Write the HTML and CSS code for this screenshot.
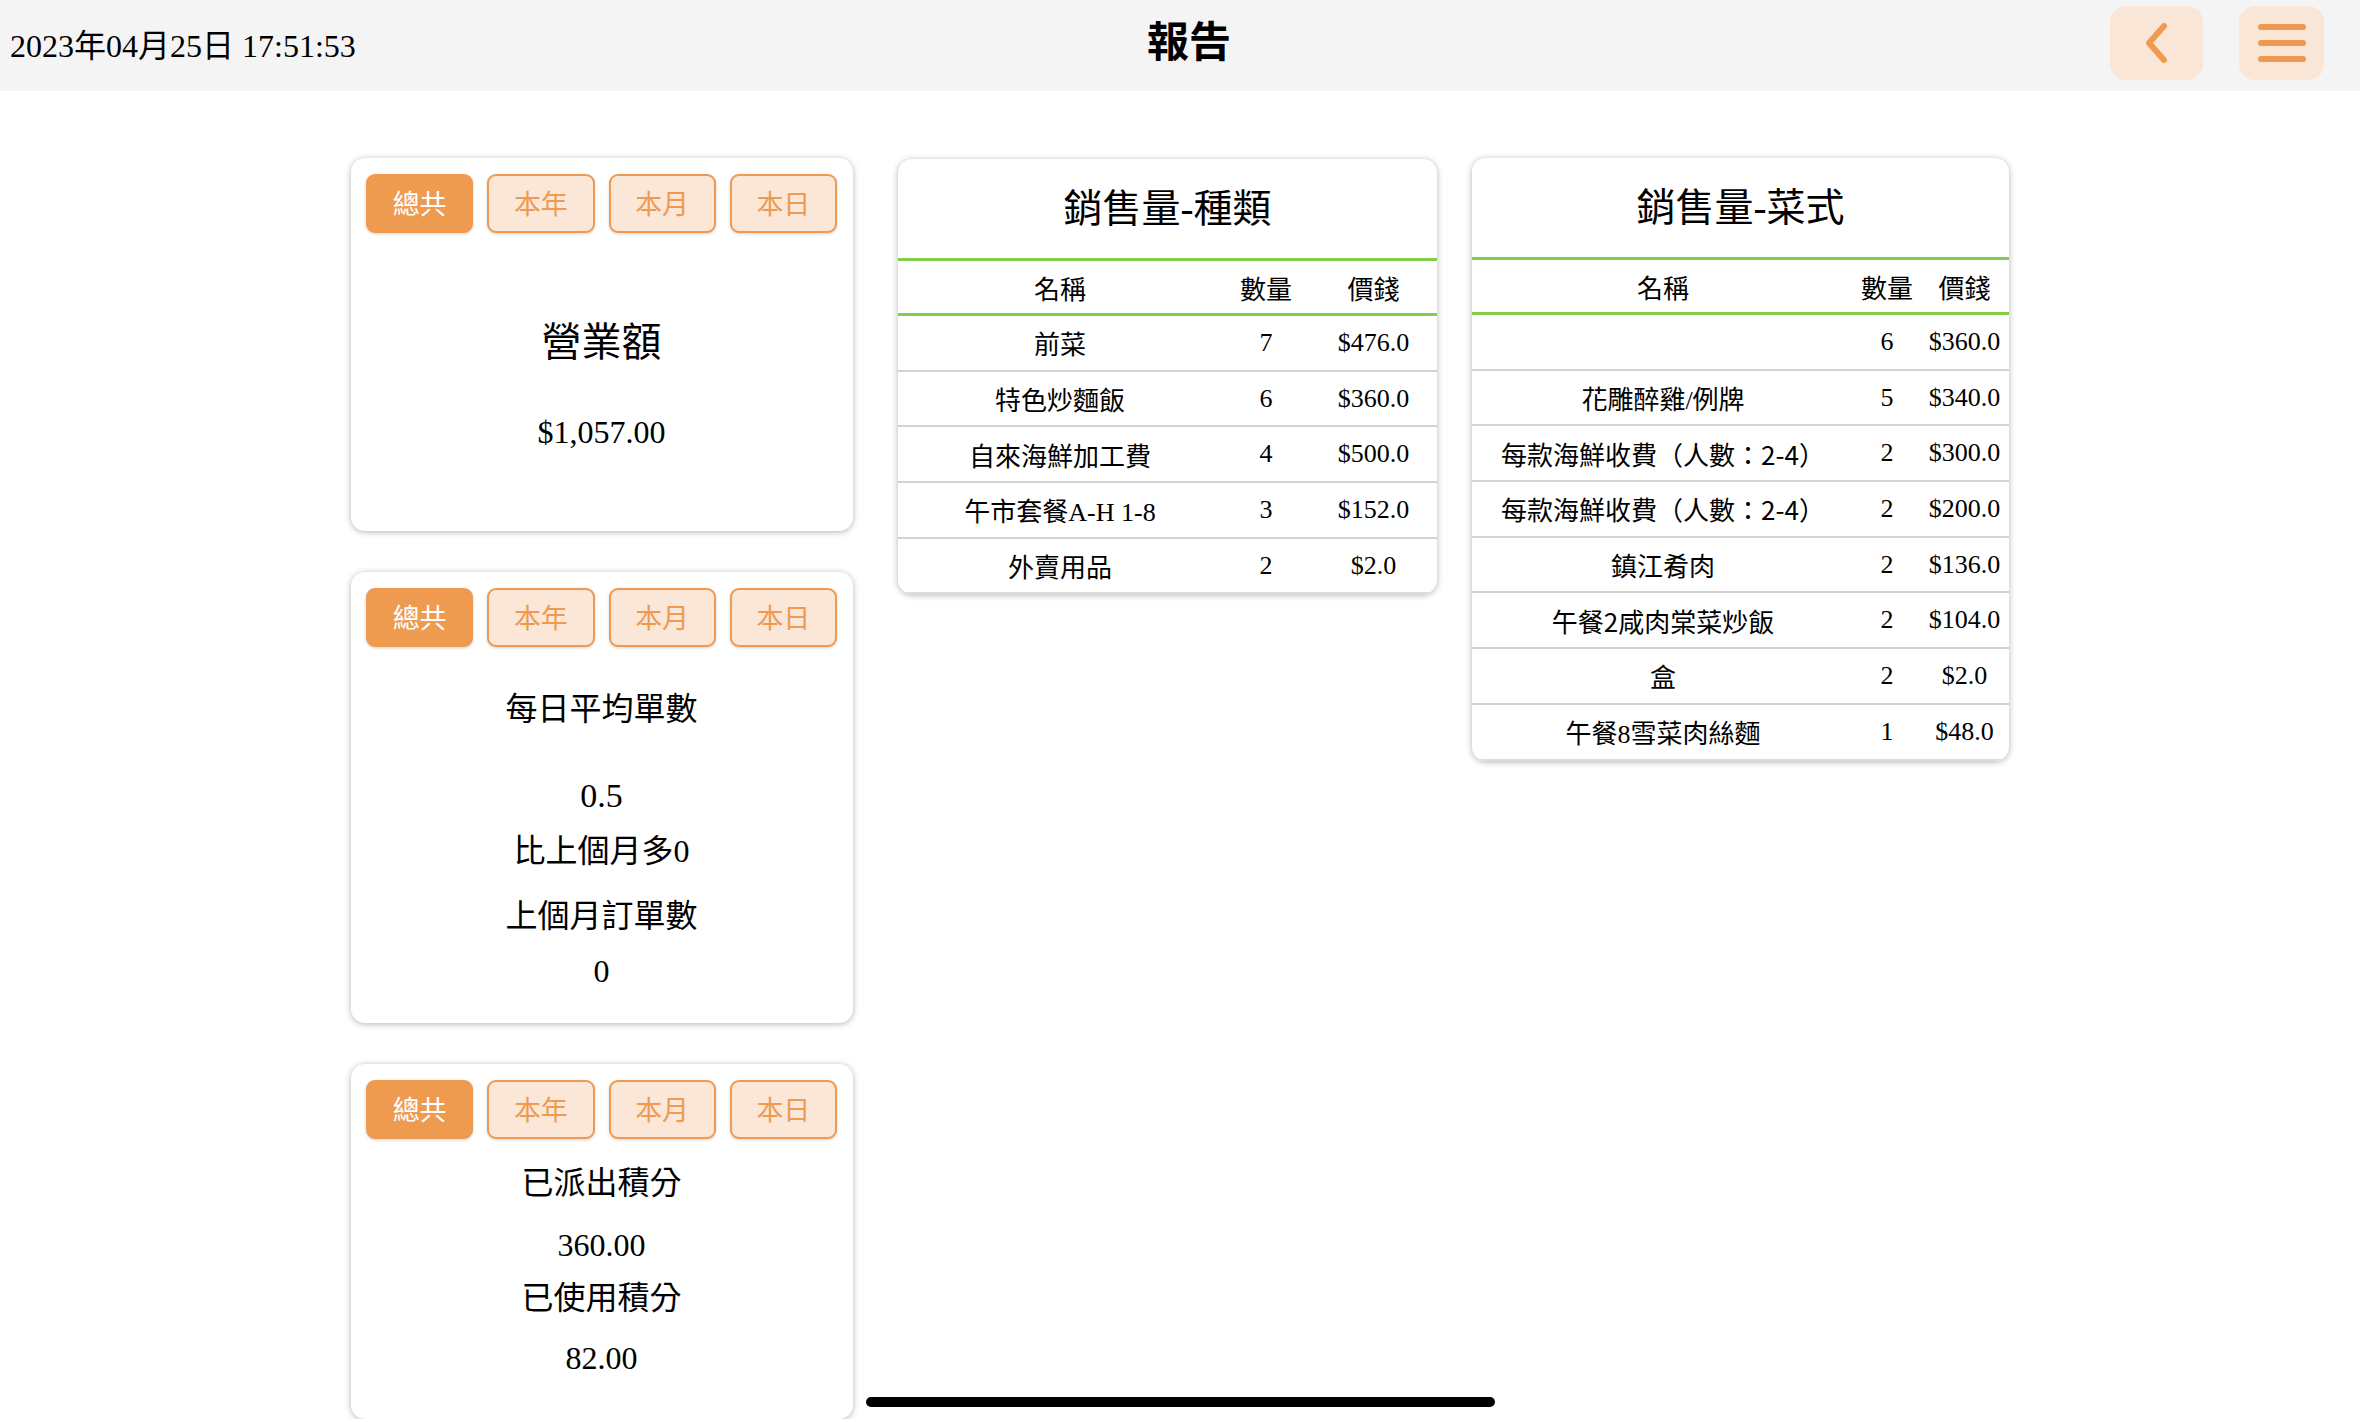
FILE: index.html
```html
<!DOCTYPE html>
<html lang="zh-Hant">
	<head>
		<meta charset="UTF-8">
		<title>報告</title>
		<link rel="stylesheet" href="styles.css">
	</head>
	<body>

		<div class="topbar">
			<div class="topbar-date">2023年04月25日 17:51:53</div>
			<div class="topbar-title">報告</div>
			<div class="topbar-actions">
				<div class="icon-btn back-btn">
					<svg width="30" height="44" viewBox="0 0 30 44">
						<polyline points="22,5 7,22 22,39" fill="none" stroke="#ef9a50" stroke-width="6" stroke-linecap="round" stroke-linejoin="round"/>
					</svg>
				</div>
				<div class="icon-btn menu-btn">
					<svg width="52" height="42" viewBox="0 0 52 42">
						<line x1="5" y1="5" x2="47" y2="5" stroke="#ef9a50" stroke-width="6" stroke-linecap="round"/>
						<line x1="5" y1="21" x2="47" y2="21" stroke="#ef9a50" stroke-width="6" stroke-linecap="round"/>
						<line x1="5" y1="37" x2="47" y2="37" stroke="#ef9a50" stroke-width="6" stroke-linecap="round"/>
					</svg>
				</div>
			</div>
		</div>

		<div class="content">

			<div class="column column-stats">

				<div class="card stat-card card-revenue">
					<div class="tabs">
						<span class="tab active">總共</span>
						<span class="tab">本年</span>
						<span class="tab">本月</span>
						<span class="tab">本日</span>
					</div>
					<div class="stat-title">營業額</div>
					<div class="stat-value revenue-value">$1,057.00</div>
				</div>

				<div class="card stat-card card-orders">
					<div class="tabs">
						<span class="tab active">總共</span>
						<span class="tab">本年</span>
						<span class="tab">本月</span>
						<span class="tab">本日</span>
					</div>
					<div class="stat-line orders-title">每日平均單數</div>
					<div class="stat-line orders-avg">0.5</div>
					<div class="stat-line orders-diff">比上個月多0</div>
					<div class="stat-line orders-last">上個月訂單數</div>
					<div class="stat-line orders-last-value">0</div>
				</div>

				<div class="card stat-card card-points">
					<div class="tabs">
						<span class="tab active">總共</span>
						<span class="tab">本年</span>
						<span class="tab">本月</span>
						<span class="tab">本日</span>
					</div>
					<div class="stat-line points-sent">已派出積分</div>
					<div class="stat-line points-sent-value">360.00</div>
					<div class="stat-line points-used">已使用積分</div>
					<div class="stat-line points-used-value">82.00</div>
				</div>

			</div>

			<div class="column column-types">
				<div class="card table-card">
					<div class="table-title">銷售量-種類</div>
					<table class="sales-table types-table">
						<colgroup>
							<col class="col-name">
							<col class="col-qty">
							<col class="col-price">
						</colgroup>
						<thead>
							<tr><th>名稱</th><th>數量</th><th>價錢</th></tr>
						</thead>
						<tbody>
							<tr><td>前菜</td><td>7</td><td>$476.0</td></tr>
							<tr><td>特色炒麵飯</td><td>6</td><td>$360.0</td></tr>
							<tr><td>自來海鮮加工費</td><td>4</td><td>$500.0</td></tr>
							<tr><td>午市套餐A-H 1-8</td><td>3</td><td>$152.0</td></tr>
							<tr><td>外賣用品</td><td>2</td><td>$2.0</td></tr>
						</tbody>
					</table>
				</div>
			</div>

			<div class="column column-dishes">
				<div class="card table-card">
					<div class="table-title">銷售量-菜式</div>
					<table class="sales-table dishes-table">
						<colgroup>
							<col class="col-name">
							<col class="col-qty">
							<col class="col-price">
						</colgroup>
						<thead>
							<tr><th>名稱</th><th>數量</th><th>價錢</th></tr>
						</thead>
						<tbody>
							<tr><td></td><td>6</td><td>$360.0</td></tr>
							<tr><td>花雕醉雞/例牌</td><td>5</td><td>$340.0</td></tr>
							<tr><td>每款海鮮收費（人數：<span class="sans">2-4</span>）</td><td>2</td><td>$300.0</td></tr>
							<tr><td>每款海鮮收費（人數：<span class="sans">2-4</span>）</td><td>2</td><td>$200.0</td></tr>
							<tr><td>鎮江肴肉</td><td>2</td><td>$136.0</td></tr>
							<tr><td>午餐<span class="sans">2</span>咸肉棠菜炒飯</td><td>2</td><td>$104.0</td></tr>
							<tr><td>盒</td><td>2</td><td>$2.0</td></tr>
							<tr><td>午餐8雪菜肉絲麵</td><td>1</td><td>$48.0</td></tr>
						</tbody>
					</table>
				</div>
			</div>

		</div>

		<div class="home-indicator"></div>

	</body>
</html>
```

FILE: styles.css
```css
body{
	margin:0;
	padding:0;
	background:#fff;
	color:#000;
	font-family:"Liberation Serif","Noto Sans CJK TC",serif;
}

/* top bar */
.topbar{
	height:91px;
	background:#f4f4f4;
	display:grid;
	grid-template-columns:1fr auto 1fr;
	align-items:center;
}
.topbar-date{
	font-size:32px;
	padding-left:10px;
	padding-bottom:5px;
}
.topbar-title{
	font-family:"Noto Sans CJK TC",sans-serif;
	font-weight:bold;
	font-size:42px;
	padding-left:18px;
	padding-bottom:14px;
}
.topbar-actions{
	display:flex;
	justify-content:flex-end;
	align-items:flex-start;
	align-self:start;
	padding-top:6px;
	padding-right:36px;
	gap:36px;
}
.icon-btn{
	height:74px;
	background:#fae6d7;
	border-radius:16px;
	display:flex;
	align-items:center;
	justify-content:center;
}
.back-btn{
	width:93px;
}
.menu-btn{
	width:85px;
}

/* content */
.content{
	display:flex;
	align-items:flex-start;
	padding-top:67px;
	padding-left:351px;
}
.column-stats{
	width:502px;
	display:flex;
	flex-direction:column;
	gap:41px;
}
.column-types{
	width:539px;
	margin-left:45px;
	margin-top:1px;
}
.column-dishes{
	width:537px;
	margin-left:35px;
}

.card{
	background:#fff;
	border-radius:14px;
	box-shadow:0 1px 6px rgba(0,0,0,0.3);
	box-sizing:border-box;
	overflow:hidden;
}

/* stat cards */
.stat-card{
	padding:16px 16px 0 15px;
	text-align:center;
}
.card-revenue{
	height:373px;
}
.card-orders{
	height:451px;
}
.card-points{
	height:355px;
}

.tabs{
	display:flex;
	gap:14px;
}
.tab{
	flex:1;
	height:59px;
	box-sizing:border-box;
	border:2px solid #ef9a50;
	border-radius:9px;
	background:#fbe7d8;
	color:#ef9a50;
	font-family:"Noto Sans CJK TC",sans-serif;
	font-size:27px;
	line-height:54px;
	box-shadow:0 1px 3px rgba(0,0,0,0.18);
}
.tab.active{
	background:#ee9a4f;
	color:#fff;
}

.stat-title{
	font-size:40px;
	line-height:48px;
	margin-top:86px;
}
.stat-value,
.stat-line{
	font-size:32px;
	line-height:40px;
}
.revenue-value{
	margin-top:45px;
}

.orders-title{
	margin-top:42px;
}
.orders-avg{
	margin-top:47px;
	font-size:34px;
}
.orders-diff{
	margin-top:15px;
}
.orders-last{
	margin-top:25px;
}
.orders-last-value{
	margin-top:15px;
}

.points-sent{
	margin-top:24px;
}
.points-sent-value{
	margin-top:22px;
}
.points-used{
	margin-top:13px;
}
.points-used-value{
	margin-top:20px;
}

/* tables */
.table-title{
	height:99px;
	line-height:99px;
	text-align:center;
	font-size:39px;
}
.sales-table{
	width:100%;
	border-collapse:collapse;
	table-layout:fixed;
	font-size:26px;
}
.sales-table th{
	font-weight:normal;
	height:52px;
	padding:0;
	border-top:3px solid #84cc4c;
	border-bottom:3px solid #84cc4c;
}
.sales-table td{
	height:53.7px;
	padding:0;
	text-align:center;
	border-bottom:2px solid #d3d3d3;
	white-space:nowrap;
}
.sales-table tbody tr:last-child td{
	border-bottom-color:#dcdcdc;
}

.types-table .col-name{
	width:324px;
}
.types-table .col-qty{
	width:88px;
}
.types-table .col-price{
	width:127px;
}
.dishes-table .col-name{
	width:382px;
}
.dishes-table .col-qty{
	width:66px;
}
.dishes-table .col-price{
	width:89px;
}

.sans{
	font-family:"Noto Sans CJK TC",sans-serif;
}

/* device home bar */
.home-indicator{
	position:fixed;
	left:866px;
	bottom:15px;
	width:629px;
	height:10px;
	border-radius:5px;
	background:#000;
}
```
